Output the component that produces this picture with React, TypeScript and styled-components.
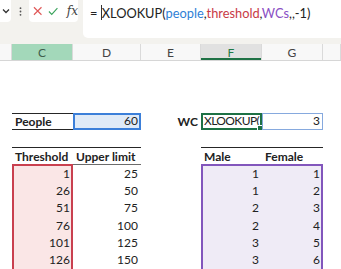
import React from 'react';
import styled, { createGlobalStyle } from 'styled-components';

const Global = createGlobalStyle`
  html, body { margin: 0; padding: 0; background: #fff; }
  body { font-family: Lato, "Liberation Sans", sans-serif; color: #222; }
`;

const Root = styled.div`
  width: 341px;
  height: 269px;
  overflow: hidden;
  display: flex;
  flex-direction: column;
  background: #fff;
`;

const TopBar = styled.div`
  height: 44px;
  flex-shrink: 0;
  background: #f3f2ee;
  display: flex;
  align-items: flex-start;
`;

const NameBoxTail = styled.div`
  width: 11px;
  height: 22px;
  background: #fff;
  border-radius: 0 0 4px 0;
  display: flex;
  align-items: center;
  justify-content: flex-end;
  padding-right: 1px;
  box-sizing: border-box;
`;

const DotsSlot = styled.div`
  width: 18px;
  height: 22px;
  display: flex;
  align-items: center;
  justify-content: center;
`;

const IconBox = styled.div`
  width: 49px;
  height: 22px;
  background: #fff;
  border-radius: 0 0 4px 4px;
  display: flex;
  align-items: center;
  gap: 6px;
  padding-left: 4px;
  box-sizing: border-box;
`;

const Fx = styled.span`
  font-family: "DejaVu Serif", "Liberation Serif", serif;
  font-style: italic;
  font-size: 12px;
  color: #444;
  margin-left: 2px;
`;

const FormulaBox = styled.div`
  flex: 1;
  height: 38px;
  margin-left: 5px;
  background: #fff;
  border-radius: 0 0 0 5px;
  padding: 5px 0 0 7px;
  box-sizing: border-box;
  font-size: 12.8px;
  line-height: 16px;
  color: #222;
  white-space: nowrap;
  display: flex;
  align-items: flex-start;
`;

const Caret = styled.span`
  display: inline-block;
  width: 1px;
  height: 15px;
  background: #333;
  margin: 0 0 0 0;
`;

const Ref = styled.span<{ $c: string }>`
  color: ${(p) => p.$c};
`;

const HeaderRow = styled.div`
  height: 16px;
  flex-shrink: 0;
  display: grid;
  grid-template-columns: 12px 61px 68px 60px 61px 61px 1fr;
  background: #f8f8f8;
  border-bottom: 1px solid #d6d6d6;
  box-sizing: content-box;
`;

const ColHead = styled.div<{ $state?: 'sel' | 'active' }>`
  display: flex;
  align-items: center;
  justify-content: center;
  font-size: 12px;
  color: ${(p) => (p.$state === 'active' ? '#1f7a47' : p.$state === 'sel' ? '#3f5f4d' : '#444')};
  background: ${(p) => (p.$state === 'sel' ? '#a3d8ba' : p.$state === 'active' ? '#e1e1e1' : 'transparent')};
  border-right: 1px solid #dadada;
  box-shadow: ${(p) => (p.$state === 'active' ? 'inset 0 -2px 0 #1e7145' : 'none')};
  box-sizing: border-box;
`;

const Sheet = styled.div`
  display: grid;
  grid-template-columns: 12px 61px 68px 60px 61px 61px 1fr;
  grid-template-rows: repeat(13, 17.25px);
`;

const Band = styled.div<{ $col: string; $row: number; $bottom?: boolean }>`
  grid-column: ${(p) => p.$col};
  grid-row: ${(p) => p.$row};
  border-top: 1px solid #262626;
  border-bottom: ${(p) => (p.$bottom ? '1px solid #262626' : 'none')};
`;

const RangeBox = styled.div<{ $col: string; $border: string; $bg: string }>`
  grid-column: ${(p) => p.$col};
  grid-row: 7 / 14;
  border: 2px solid ${(p) => p.$border};
  border-bottom: none;
  background: ${(p) => p.$bg};
  margin-top: -1px;
`;

const Cell = styled.div<{
  $col: string | number;
  $row: number;
  $right?: boolean;
  $bold?: boolean;
  $tight?: boolean;
}>`
  grid-column: ${(p) => p.$col};
  grid-row: ${(p) => p.$row};
  position: relative;
  z-index: 1;
  display: flex;
  align-items: flex-end;
  justify-content: ${(p) => (p.$right ? 'flex-end' : 'flex-start')};
  padding: 0 3px 1px 3px;
  font-size: 12px;
  line-height: 15px;
  letter-spacing: ${(p) => (p.$tight ? '-0.6px' : 'normal')};
  font-weight: ${(p) => (p.$bold ? 700 : 400)};
  color: #222;
  white-space: nowrap;
  overflow: visible;
  box-sizing: border-box;
`;

const RefCell = styled(Cell)<{ $border: string; $w: number; $bg?: string }>`
  border: ${(p) => p.$w}px solid ${(p) => p.$border};
  background: ${(p) => p.$bg || 'transparent'};
  padding: 0 ${(p) => 3 - p.$w}px ${(p) => 2 - p.$w}px ${(p) => 3 - p.$w}px;
`;

const HeadUnder = styled.div<{ $col: string; $row: number }>`
  grid-column: ${(p) => p.$col};
  grid-row: ${(p) => p.$row};
  border-bottom: 1px solid #6b6b6b;
`;

const FillHandle = styled.span`
  position: absolute;
  right: -3px;
  bottom: -3px;
  width: 4px;
  height: 4px;
  background: #1e7145;
  border: 1px solid #fff;
`;

const thresholds = [1, 26, 51, 76, 101, 126];
const uppers = [25, 50, 75, 100, 125, 150];
const males = [1, 1, 2, 2, 3, 3];
const females = [1, 2, 3, 4, 5, 6];

export default function App() {
  return (
    <Root>
      <Global />
      <TopBar>
        <NameBoxTail>
          <svg width="8" height="6" viewBox="0 0 8 6">
            <path d="M1 1.5 L4 4.5 L7 1.5" fill="none" stroke="#333" strokeWidth="1.3" />
          </svg>
        </NameBoxTail>
        <DotsSlot>
          <svg width="3" height="9" viewBox="0 0 3 9">
            <circle cx="1.5" cy="1.2" r="0.9" fill="#555" />
            <circle cx="1.5" cy="4.5" r="0.9" fill="#555" />
            <circle cx="1.5" cy="7.8" r="0.9" fill="#555" />
          </svg>
        </DotsSlot>
        <IconBox>
          <svg width="10" height="10" viewBox="0 0 10 10">
            <path d="M1 1 L9 9 M9 1 L1 9" stroke="#e05858" strokeWidth="1.2" />
          </svg>
          <svg width="11" height="9" viewBox="0 0 11 9">
            <path d="M1 4.5 L4 7.5 L10 1" fill="none" stroke="#3aa35c" strokeWidth="1.2" />
          </svg>
          <Fx>fx</Fx>
        </IconBox>
        <FormulaBox>
          <span>=&nbsp;</span>
          <Caret />
          <span>
            XLOOKUP(<Ref $c="#2f7fd6">people</Ref>,<Ref $c="#c83a45">threshold</Ref>,
            <Ref $c="#8a4fc4">WCs</Ref>,,-1)
          </span>
        </FormulaBox>
      </TopBar>
      <HeaderRow>
        <ColHead />
        <ColHead $state="sel">C</ColHead>
        <ColHead>D</ColHead>
        <ColHead>E</ColHead>
        <ColHead $state="active">F</ColHead>
        <ColHead>G</ColHead>
        <ColHead />
      </HeaderRow>
      <Sheet>
        <Band $col="2 / 4" $row={4} $bottom />
        <Cell $col={2} $row={4} $bold>People</Cell>
        <RefCell $col={3} $row={4} $right $border="#3b7fd9" $w={2} $bg="#dfeaf7">60</RefCell>
        <Cell $col={4} $row={4} $right $bold>WC</Cell>
        <RefCell $col={5} $row={4} $border="#1e7145" $w={2} $tight>
          XLOOKUP(
          <FillHandle />
        </RefCell>
        <RefCell $col={6} $row={4} $right $border="#86a9de" $w={1}>3</RefCell>

        <Band $col="2 / 4" $row={6} />
        <HeadUnder $col="3" $row={6} />
        <Cell $col={2} $row={6} $bold>Threshold</Cell>
        <Cell $col={3} $row={6} $bold>Upper limit</Cell>
        <Band $col="5 / 7" $row={6} />
        <Cell $col={5} $row={6} $bold>Male</Cell>
        <Cell $col={6} $row={6} $bold>Female</Cell>

        <RangeBox $col="2" $border="#c9404f" $bg="#fae6e6" />
        <RangeBox $col="5 / 7" $border="#8256bc" $bg="#efebf6" />
        {thresholds.map((t, i) => (
          <React.Fragment key={t}>
            <Cell $col={2} $row={7 + i} $right>{t}</Cell>
            <Cell $col={3} $row={7 + i} $right>{uppers[i]}</Cell>
            <Cell $col={5} $row={7 + i} $right>{males[i]}</Cell>
            <Cell $col={6} $row={7 + i} $right>{females[i]}</Cell>
          </React.Fragment>
        ))}
      </Sheet>
    </Root>
  );
}
